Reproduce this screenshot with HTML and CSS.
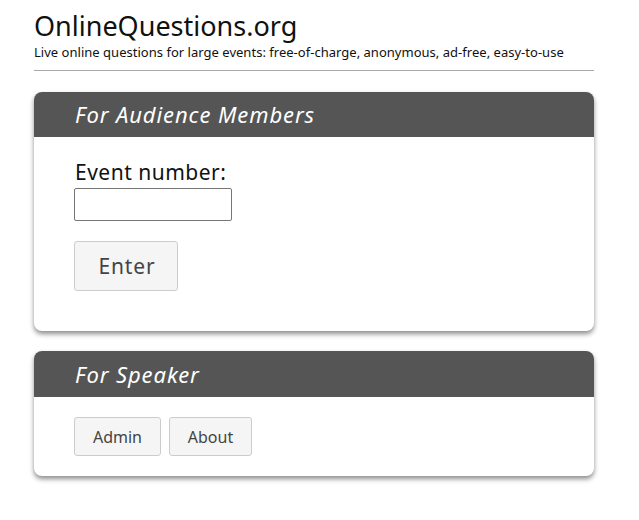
FILE: index.html
```html
<!DOCTYPE html>
<html>
<head>
<meta charset="utf-8">
<link rel="stylesheet" href="styles.css">
</head>
<body>
<div class="page">
  <header class="site-header">
    <h1 class="site-title">OnlineQuestions.org</h1>
    <p class="site-tagline">Live online questions for large events: free-of-charge, anonymous, ad-free, easy-to-use</p>
  </header>
  <section class="card">
    <h2 class="card-head">For Audience Members</h2>
    <div class="card-body audience">
      <label class="field-label" for="ev">Event number:</label>
      <input class="field-input" id="ev" type="text">
      <button class="btn btn-large">Enter</button>
    </div>
  </section>
  <section class="card">
    <h2 class="card-head">For Speaker</h2>
    <div class="card-body speaker">
      <button class="btn">Admin</button>
      <button class="btn">About</button>
    </div>
  </section>
</div>
</body>
</html>
```
FILE: styles.css
```css
* { box-sizing: border-box; }
body {
  margin: 0;
  background: #fff;
  font-family: "Noto Sans", "Open Sans", sans-serif;
  color: #111;
}
.page {
  width: 560px;
  margin-left: 34px;
  padding-top: 9px;
}
.site-header {
  border-bottom: 1px solid #aaa;
  padding-bottom: 9px;
  margin-bottom: 21px;
}
.site-title {
  margin: 0;
  font-size: 27px;
  font-weight: 400;
  line-height: 34px;
}
.site-tagline {
  margin: 0;
  font-size: 13px;
  letter-spacing: 0.02px;
  line-height: 18px;
}
.card {
  border-radius: 8px;
  overflow: hidden;
  box-shadow: 0 3px 5px rgba(0,0,0,0.45);
  margin-bottom: 20px;
  background: #fff;
}
.card-head {
  margin: 0;
  background: #555;
  color: #fff;
  font-style: italic;
  font-weight: 400;
  font-size: 22px;
  letter-spacing: 0.9px;
  line-height: 45px;
  padding-left: 41px;
}
.card:last-child .card-head { line-height: 46px; }
.card-body {
  padding: 0 40px;
}
.audience {
  display: flex;
  flex-direction: column;
  align-items: flex-start;
  padding-top: 21px;
  padding-bottom: 40px;
}
.field-label {
  font-size: 21px;
  letter-spacing: 0.5px;
  line-height: 28px;
  color: #111;
  margin-left: 1px;
}
.field-input {
  width: 158px;
  height: 33px;
  border: 1px solid #767676;
  border-radius: 2px;
  margin: 2px 0 20px;
}
.btn {
  font-family: inherit;
  background: #f5f5f5;
  border: 1px solid #ccc;
  border-radius: 3px;
  color: #444;
  font-size: 16px;
  height: 39px;
  padding: 0;
}
.btn-large {
  font-size: 21px;
  letter-spacing: 0.8px;
  height: 50px;
  width: 104px;
  padding-left: 2px;
}
.speaker {
  display: flex;
  gap: 8px;
  padding-top: 20px;
  padding-bottom: 20px;
}
.speaker .btn:first-child { width: 87px; }
.speaker .btn:last-child { width: 83px; }
```
